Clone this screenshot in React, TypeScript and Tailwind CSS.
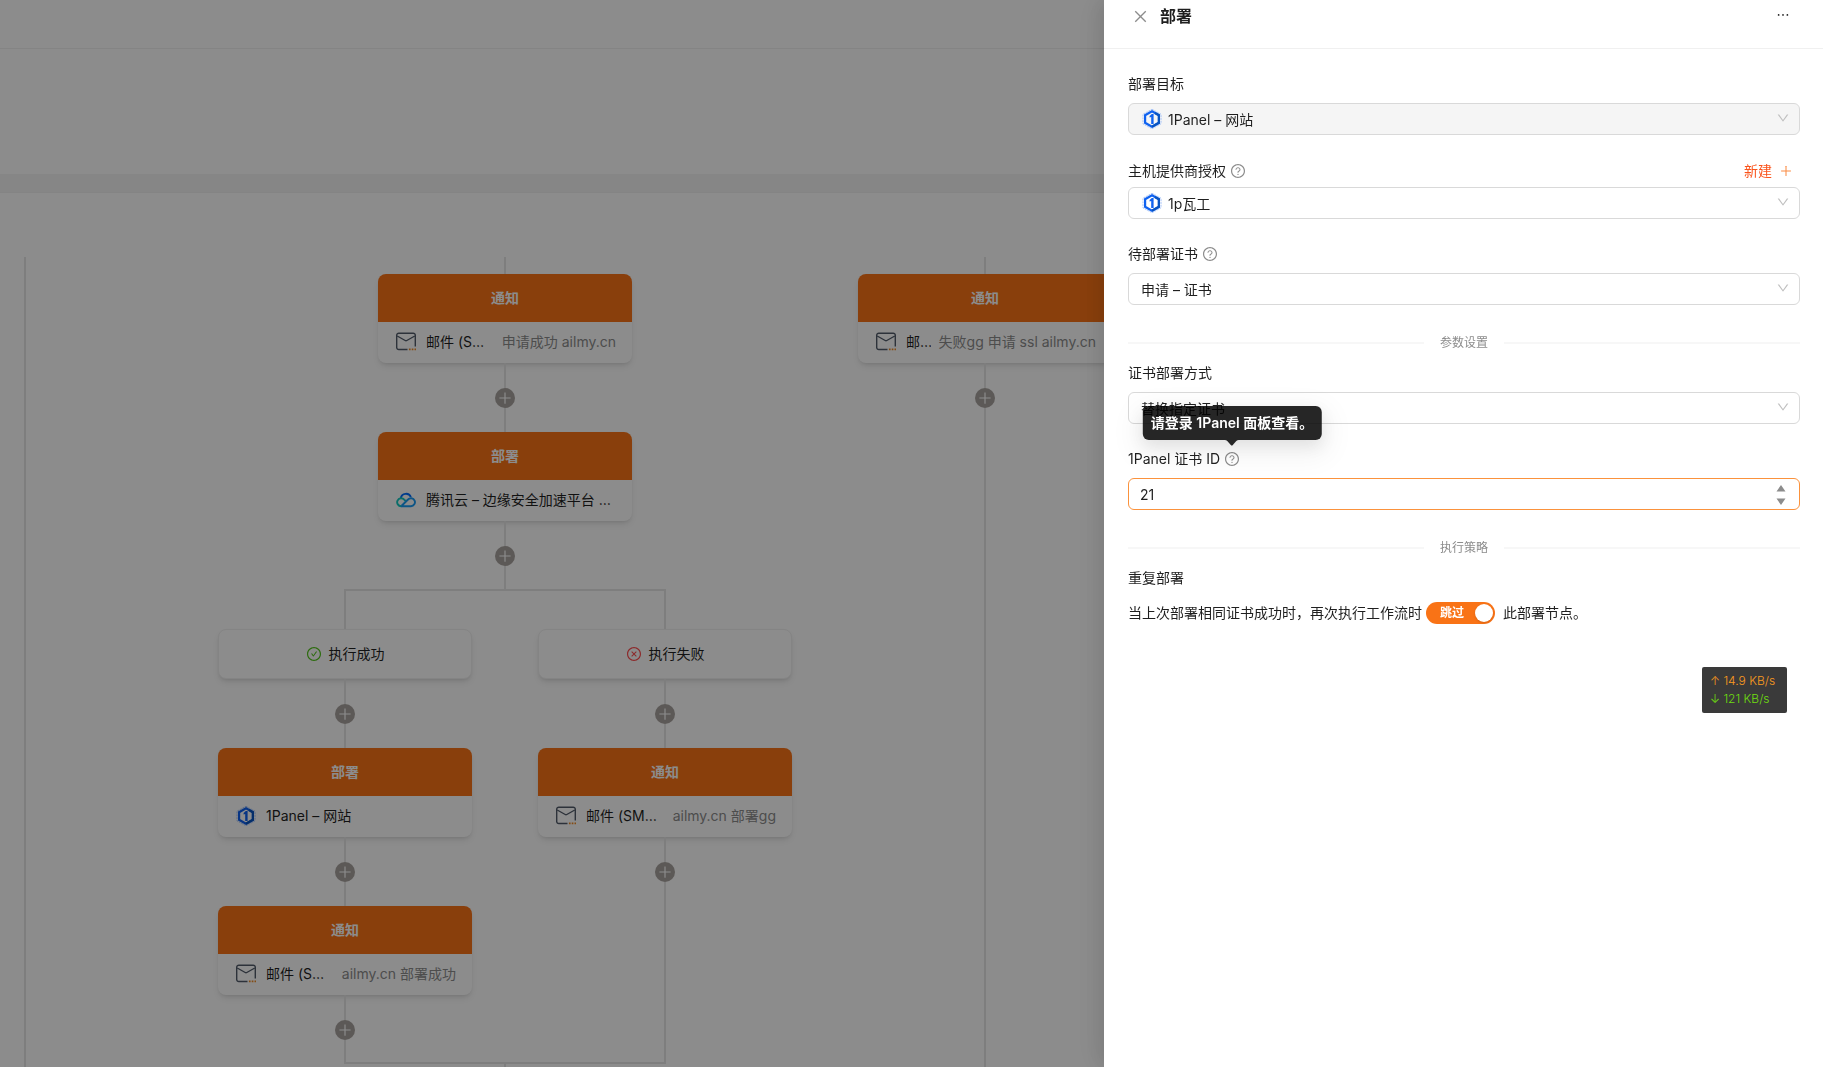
import React from "react";
import {
    AiOutlineCheckCircle,
    AiOutlineClose,
    AiOutlineCloseCircle,
    AiOutlineDown,
    AiOutlineEllipsis,
    AiOutlinePlus,
    AiOutlineQuestionCircle,
} from "react-icons/ai";
import { useState } from "react";

interface NodeCardProps {
    title: string;
    icon: React.ReactNode;
    name: string;
    remark?: string;
}

interface SelectFieldProps {
    id: string;
    value: string;
    icon?: React.ReactNode;
    disabled?: boolean;
}

interface FieldLabelProps {
    htmlFor: string;
    text: string;
    help?: boolean;
    children?: React.ReactNode;
}

const PanelLogo = () => (
    <svg className="size-5 shrink-0" viewBox="0 0 20 20" aria-hidden="true">
        <path d="M10 0.3 19 5.2V14.800L10 19.700 1 14.800V5.200Z" fill="none" stroke="#9dbdf7" strokeWidth="0.9" strokeDasharray="2 0.8" />
        <path d="M10 2.300 16.900 6.200V13.800L10 17.700 3.100 13.800V6.200Z" fill="none" stroke="#0f62f0" strokeWidth="2.200" />
        <path d="M10 17.700 16.900 13.800V6.200L13 4" fill="none" stroke="#0854c1" strokeWidth="2.200" />
        <path d="M7.600 7 9.800 5H11.600V15H9.200V7.900L7.600 8.500Z" fill="#0f62f0" />
    </svg>
)

const MailIcon = () => (
    <svg className="size-5 shrink-0" viewBox="0 0 20 20" fill="none" strokeWidth="1.4" aria-hidden="true">
        <path d="M11.5 17.5H2.8A2.1 2.1 0 0 1 .7 15.400V3.300A2.100 2.100 0 0 1 2.800 1.200H17.200A2.100 2.100 0 0 1 19.300 3.300V14.500" stroke="#525c6b" />
        <path d="M1.200 4 9.200 8.500Q10 9 10.800 8.500L18.800 4" stroke="#525c6b" />
        <path d="M12.900 17.300H20" stroke="#f08a24" strokeWidth="1.700" strokeDasharray="1.700 1.100" />
    </svg>
)

const CloudIcon = () => (
    <svg className="size-5 shrink-0" viewBox="0 0 20 20" fill="none" strokeWidth="1.900" aria-hidden="true">
        <path d="M4.800 8.200A5.300 5.300 0 0 1 14.900 7" stroke="#006eff" />
        <path d="M5.200 16.200A4 4 0 1 1 8.200 9.600L10 11.200" stroke="#13c8c0" />
        <path d="M5 16.200H15A4 4 0 1 0 12 9.500L5.400 16" stroke="#1a9cf5" />
    </svg>
)

const Line = ({ className = "h-4" }: { className?: string }) => (
    <div className={`mx-auto w-0.5 bg-[#e6e6e6] ${className}`} />
)

const Connector = () => (
    <div className="flex h-[69px] flex-col items-center">
        <Line className="flex-1" />
        <button aria-label="添加节点" className="flex size-5 items-center justify-center rounded-full bg-[#a8a29e] text-base text-white">
            <AiOutlinePlus />
        </button>
        <Line className="flex-1" />
    </div>
)

const NodeCard: React.FC<NodeCardProps> = ({ title, icon, name, remark }) => (
    <div className="mx-auto h-[89px] w-[254px] overflow-hidden rounded-lg bg-white shadow-md">
        <div className="flex h-12 items-center justify-center bg-[#f97316] font-bold text-white">
            {title}
        </div>
        <div className="flex h-10 items-center pr-4 pl-[18px]">
            {icon}
            <div className="ml-2.5 min-w-0 flex-1 truncate">{name}</div>
            {remark && <div className="ml-2 shrink-0 text-[#8c8c8c]">{remark}</div>}
        </div>
    </div>
)

const ConditionCard = ({ icon, text }: { icon: React.ReactNode; text: string }) => (
    <div className="mx-auto flex h-[50px] w-[254px] items-center justify-center gap-[7px] rounded-lg border border-[#f0f0f0] bg-white shadow-md">
        {icon}
        <span>{text}</span>
    </div>
)

const Workflow = () => (
    <div className="-ml-[135px] flex w-[1280px] pt-16">
        <div className="w-80">
            <Line className="h-full" />
        </div>
        <div className="flex w-[640px] flex-col">
            <Line className="h-[17px]" />
            <NodeCard title="通知" icon={<MailIcon />} name="邮件 (SMTP)" remark="申请成功 ailmy.cn" />
            <Connector />
            <NodeCard title="部署" icon={<CloudIcon />} name="腾讯云 – 边缘安全加速平台 EdgeOne" />
            <Connector />
            <div className="mx-auto -mt-px h-0.5 w-[322px] bg-[#e6e6e6]" />
            <div className="flex">
                <div className="flex w-80 flex-col">
                    <Line className="h-[38px]" />
                    <ConditionCard icon={<AiOutlineCheckCircle className="size-4 text-[#52c41a]" />} text="执行成功" />
                    <Connector />
                    <NodeCard title="部署" icon={<PanelLogo />} name="1Panel – 网站" />
                    <Connector />
                    <NodeCard title="通知" icon={<MailIcon />} name="邮件 (SMTP)" remark="ailmy.cn 部署成功" />
                    <Connector />
                </div>
                <div className="flex w-80 flex-col">
                    <Line className="h-[38px]" />
                    <ConditionCard icon={<AiOutlineCloseCircle className="size-4 text-[#ff4d4f]" />} text="执行失败" />
                    <Connector />
                    <NodeCard title="通知" icon={<MailIcon />} name="邮件 (SMTP)" remark="ailmy.cn 部署gg" />
                    <Connector />
                    <Line className="flex-1" />
                </div>
            </div>
            <div className="mx-auto -mt-0.5 h-0.5 w-[322px] bg-[#e6e6e6]" />
            <Line className="h-16" />
        </div>
        <div className="flex w-80 flex-col">
            <Line className="h-[17px]" />
            <NodeCard title="通知" icon={<MailIcon />} name="邮件 (SMTP)" remark="失败gg 申请 ssl ailmy.cn" />
            <Connector />
            <Line className="flex-1" />
        </div>
    </div>
)

const FieldLabel: React.FC<FieldLabelProps> = ({ htmlFor, text, help, children }) => (
    <div className="flex h-8 items-center">
        <label htmlFor={htmlFor}>{text}</label>
        {help && (
            <span className="relative ml-1 text-[#8c8c8c]">
                <AiOutlineQuestionCircle className="size-4" />
                {children}
            </span>
        )}
    </div>
)

const SelectField: React.FC<SelectFieldProps> = ({ id, value, icon, disabled }) => (
    <div className="relative">
        {icon && <span className="pointer-events-none absolute top-1.5 left-3.5">{icon}</span>}
        <select
            id={id}
            disabled={disabled}
            className={`block h-8 w-full appearance-none rounded-md border border-[#d9d9d9] pt-0.5 pr-8 text-sm text-[#1f1f1f] opacity-100 outline-none ${icon ? "pl-[39px]" : "pl-3"} ${disabled ? "bg-[#f5f5f5]" : "bg-white"}`}
        >
            <option>{value}</option>
        </select>
        <AiOutlineDown className="pointer-events-none absolute top-2 right-2.5 size-3.5 text-[#bfbfbf]" />
    </div>
)

const Divider = ({ text }: { text: string }) => (
    <div className="flex h-5 items-center gap-4 text-xs text-[#8c8c8c]">
        <div className="h-0.5 flex-1 bg-[#f7f7f7]" />
        {text}
        <div className="h-0.5 flex-1 bg-[#f7f7f7]" />
    </div>
)

const DeployDrawer = () => {
    const [certId, setCertId] = useState("21")
    const [skip, setSkip] = useState(true)

    return (
        <aside className="fixed inset-y-0 right-0 w-[719px] bg-white shadow-[-6px_0_16px_rgba(0,0,0,0.08),-9px_0_28px_rgba(0,0,0,0.05)]">
            <header className="flex h-[49px] items-start border-b border-[#f0f0f0] pt-1 pr-8 pl-7">
                <button aria-label="关闭" className="flex h-6 items-center text-[#8c8c8c]">
                    <AiOutlineClose className="size-[17px]" />
                </button>
                <h1 className="ml-[11px] flex-1 text-base font-bold">部署</h1>
                <button aria-label="更多" className="flex h-[22px] items-center text-base">
                    <AiOutlineEllipsis />
                </button>
            </header>
            <form className="pt-[19px] pr-[23px] pl-6" onSubmit={e => e.preventDefault()}>
                <FieldLabel htmlFor="target" text="部署目标" />
                <div className="pt-[3px]">
                    <SelectField id="target" value="1Panel – 网站" icon={<PanelLogo />} disabled />
                </div>

                <div className="mt-5 flex items-center justify-between pr-[7px]">
                    <FieldLabel htmlFor="access" text="主机提供商授权" help />
                    <button type="button" className="flex items-center gap-[7px] text-[#fa541c]">
                        新建
                        <AiOutlinePlus className="size-3.5 text-[#fa8c45]" />
                    </button>
                </div>
                <SelectField id="access" value="1p瓦工" icon={<PanelLogo />} />

                <div className="mt-[19px]">
                    <FieldLabel htmlFor="cert" text="待部署证书" help />
                </div>
                <div className="pt-[3px]">
                    <SelectField id="cert" value="申请 – 证书" />
                </div>

                <div className="mt-7">
                    <Divider text="参数设置" />
                </div>
                <div className="mt-1">
                    <FieldLabel htmlFor="method" text="证书部署方式" />
                </div>
                <div className="pt-[3px]">
                    <SelectField id="method" value="替换指定证书" />
                </div>

                <div className="mt-[19px]">
                    <FieldLabel htmlFor="certId" text="1Panel 证书 ID" help>
                        <span role="tooltip" className="absolute bottom-[27px] left-1/2 z-10 flex h-[34px] -translate-x-1/2 items-center rounded-md bg-black/85 px-2 font-semibold whitespace-nowrap text-white shadow-[0_6px_16px_rgba(0,0,0,0.08),0_9px_28px_8px_rgba(0,0,0,0.05)]">
                            请登录 1Panel 面板查看。
                            <svg className="absolute top-full left-1/2 -translate-x-1/2" width="14" height="6" viewBox="0 0 14 6">
                                <path d="M0 0H14Q12.500 0 11.500 1L8 5Q7 6 6 5L2.500 1Q1.500 0 0 0Z" fill="#262626" />
                            </svg>
                        </span>
                    </FieldLabel>
                </div>
                <div className="relative pt-[3px]">
                    <input
                        id="certId"
                        value={certId}
                        onChange={e => setCertId(e.target.value)}
                        className="block h-8 w-full rounded-md border border-[#fb923c] bg-white px-[11px] text-sm outline-none"
                    />
                    <svg className="absolute top-2.5 right-3.5" width="10" height="20" viewBox="0 0 10 20" fill="#8c8c8c" aria-hidden="true">
                        <path d="M5 0 9.500 6.500H.5ZM5 20 9.500 13.500H.5Z" />
                    </svg>
                </div>

                <div className="mt-7">
                    <Divider text="执行策略" />
                </div>
                <div className="mt-1">
                    <FieldLabel htmlFor="skip" text="重复部署" />
                </div>
                <div className="mt-2 flex items-center">
                    <span>当上次部署相同证书成功时，再次执行工作流时</span>
                    <label className="mr-2 ml-1 flex h-[22px] w-[69px] items-center justify-between rounded-full bg-[#f97316] pr-0.5 pl-3.5 text-xs font-bold text-white">
                        <input id="skip" type="checkbox" className="sr-only" checked={skip} onChange={e => setSkip(e.target.checked)} />
                        跳过
                        <span className="size-[18px] rounded-full bg-white shadow-sm" />
                    </label>
                    <span>此部署节点。</span>
                </div>
            </form>
        </aside>
    )
}

const NetSpeed = () => (
    <div className="fixed top-[667px] right-9 flex h-[46px] w-[85px] flex-col justify-center rounded-xs bg-[#3a3a3a] px-2 text-xs leading-[18px] font-light">
        <span className="text-[#fa9a1e]">↑ 14.9 KB/s</span>
        <span className="text-[#6fdd0f]">↓ 121 KB/s</span>
    </div>
)

export default function App() {
    return (
        <div className="h-screen overflow-hidden bg-white font-['Inter','Noto_Sans_CJK_SC',sans-serif] text-sm text-[#1f1f1f]">
            <main>
                <div className="h-[49px] border-b border-[#f0f0f0]" />
                <div className="h-[125px]" />
                <div className="h-[19px] border-b border-[#f0f0f0] bg-[#f5f5f5]" />
                <Workflow />
            </main>
            <div className="fixed inset-0 bg-black/45" />
            <DeployDrawer />
            <NetSpeed />
        </div>
    )
}
